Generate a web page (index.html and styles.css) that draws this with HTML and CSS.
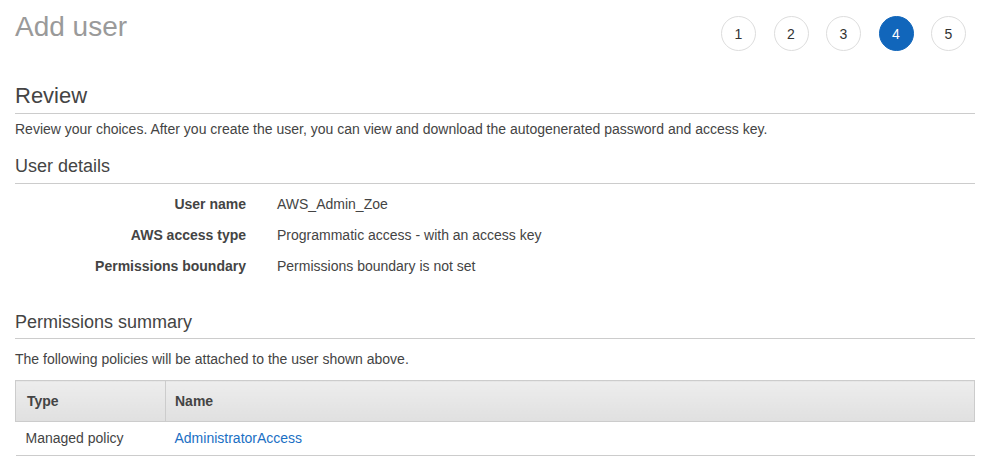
FILE: index.html
```html
<!DOCTYPE html>
<html lang="en">
<head>
<meta charset="utf-8">
<title>Add user</title>
<link rel="stylesheet" href="styles.css">
</head>
<body>
<div class="page">
  <header class="top">
    <h1 class="title">Add user</h1>
    <ol class="steps">
      <li class="step">1</li>
      <li class="step">2</li>
      <li class="step">3</li>
      <li class="step step-active">4</li>
      <li class="step">5</li>
    </ol>
  </header>

  <h2 class="section-title section-review">Review</h2>
  <p class="intro">Review your choices. After you create the user, you can view and download the autogenerated password and access key.</p>

  <h3 class="sub-title sub-details">User details</h3>
  <dl class="details">
    <dt>User name</dt><dd>AWS_Admin_Zoe</dd>
    <dt>AWS access type</dt><dd>Programmatic access - with an access key</dd>
    <dt>Permissions boundary</dt><dd>Permissions boundary is not set</dd>
  </dl>

  <h3 class="sub-title sub-perms">Permissions summary</h3>
  <p class="perms-text">The following policies will be attached to the user shown above.</p>

  <table class="policies">
    <thead>
      <tr><th class="col-type">Type</th><th class="col-name">Name</th></tr>
    </thead>
    <tbody>
      <tr><td>Managed policy</td><td class="col-name"><a class="link" href="#">AdministratorAccess</a></td></tr>
    </tbody>
  </table>
</div>
</body>
</html>
```

FILE: styles.css
```css
html, body {
  margin: 0;
  padding: 0;
  background: #ffffff;
}

body {
  font-family: "Liberation Sans", Arial, Helvetica, sans-serif;
  font-size: 14px;
  color: #444444;
}

.page {
  width: 960px;
  margin-left: 15px;
}

.top {
  display: flex;
  justify-content: space-between;
  align-items: flex-start;
  padding-top: 11px;
  height: 40px;
}

.title {
  margin: 0;
  font-size: 28px;
  line-height: 32px;
  font-weight: normal;
  color: #9a9a9a;
}

.steps {
  list-style: none;
  display: flex;
  gap: 17.5px;
  margin: 5px 9px 0 0;
  padding: 0;
}

.step {
  width: 33px;
  height: 33px;
  border: 1px solid #dddddd;
  border-radius: 50%;
  display: flex;
  align-items: center;
  justify-content: center;
  font-size: 14px;
  color: #333333;
  background: #ffffff;
}

.step-active {
  background: #1166bb;
  border-color: #1166bb;
  color: #ffffff;
}

.section-title {
  margin: 32px 0 0;
  font-size: 22px;
  line-height: 26px;
  font-weight: normal;
  color: #444444;
  padding-bottom: 4px;
  border-bottom: 1px solid #cccccc;
}

.intro {
  margin: 5px 0 0;
  line-height: 20px;
}

.sub-title {
  margin: 0;
  font-size: 18px;
  line-height: 22px;
  font-weight: normal;
  color: #444444;
  padding-bottom: 5px;
  border-bottom: 1px solid #cccccc;
}

.sub-details {
  margin-top: 16px;
  padding-bottom: 6px;
}

.details {
  display: grid;
  grid-template-columns: 231px auto;
  column-gap: 31px;
  row-gap: 11px;
  margin: 10px 0 0;
  line-height: 20px;
}

.details dt {
  text-align: right;
  font-weight: bold;
  color: #444444;
}

.details dd {
  margin: 0;
  color: #444444;
}

.sub-perms {
  margin-top: 35px;
}

.perms-text {
  margin: 10px 0 0;
  line-height: 20px;
}

.policies {
  width: 960px;
  margin-top: 11px;
  border-collapse: collapse;
  font-size: 14px;
}

.policies th {
  text-align: left;
  font-weight: bold;
  color: #444444;
  line-height: 20px;
  padding: 10px 10px;
  background: linear-gradient(#ededed, #e0e0e0);
  border: 1px solid #cccccc;
}

.policies .col-type {
  width: 128px;
  padding-left: 11px;
}

.policies td {
  line-height: 21px;
  padding: 6px 10px;
  border-bottom: 1px solid #cccccc;
  color: #444444;
}

.policies .col-name {
  padding-left: 9px;
}

.link {
  color: #1a6fc4;
  text-decoration: none;
}
```
